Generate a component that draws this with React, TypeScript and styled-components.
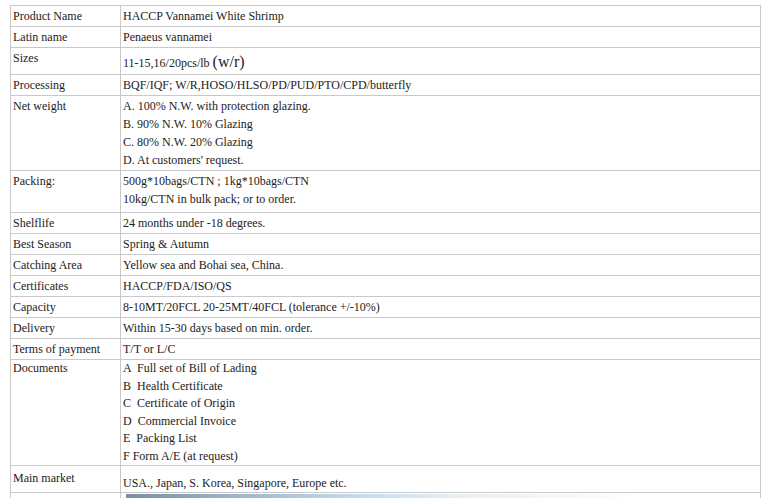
import styled, { createGlobalStyle } from "styled-components";

const GlobalStyle = createGlobalStyle`
  html, body {
    margin: 0;
    padding: 0;
    background: #ffffff;
    overflow: hidden;
  }
`;

const Page = styled.div`
  padding: 5px 0 0 10px;
`;

const SpecTable = styled.table`
  width: 751px;
  border-collapse: collapse;
  table-layout: fixed;
  font-family: "Liberation Serif", "Times New Roman", serif;
  font-size: 12px;
  color: #222;
`;

const Cell = styled.td<{ $pad?: number; $bottom?: number }>`
  border: 1px solid #c9c9c9;
  padding: ${(p) => p.$pad ?? 1}px 2px ${(p) => p.$bottom ?? 1}px 2px;
  vertical-align: top;
  font-family: "Liberation Serif", "Times New Roman", serif;
  font-size: 12px;
  line-height: 18px;
  color: #222;
`;

const Label = styled(Cell)`
  width: 105px;
`;

const Big = styled.span`
  font-size: 16px;
  line-height: 18px;
`;

const Line = styled.div<{ $h?: number }>`
  white-space: pre;
  height: ${(p) => p.$h ?? 18}px;
  line-height: ${(p) => p.$h ?? 18}px;
  font-family: "Liberation Serif", "Times New Roman", serif;
`;

const Photo = styled.div`
  margin: 0 0 0 3px;
  height: 160px;
  width: 520px;
  background: linear-gradient(
    90deg,
    #7d8ca3 0%,
    #9fb2c6 20%,
    #c9dbea 45%,
    #e6f0f7 65%,
    #ffffff 100%
  );
`;

type Row = {
  label: string;
  lines: React.ReactNode[];
  pad?: number;
  bottom?: number;
  labelPad?: number;
  lineH?: number;
};

const rows: Row[] = [
  { label: "Product Name", lines: ["HACCP Vannamei White Shrimp"] },
  { label: "Latin name", lines: ["Penaeus vannamei"] },
  {
    label: "Sizes",
    lines: [
      <>
        11-15,16/20pcs/lb <Big>(w/r)</Big>
      </>,
    ],
    pad: 5,
    bottom: 3,
  },
  { label: "Processing", lines: ["BQF/IQF; W/R,HOSO/HLSO/PD/PUD/PTO/CPD/butterfly"] },
  {
    label: "Net weight",
    lines: [
      "A. 100% N.W. with protection glazing.",
      "B. 90% N.W. 10% Glazing",
      "C. 80% N.W. 20% Glazing",
      "D. At customers' request.",
    ],
  },
  {
    label: "Packing:",
    lines: ["500g*10bags/CTN ; 1kg*10bags/CTN", "10kg/CTN in bulk pack; or to order."],
    pad: 1,
    bottom: 4,
  },
  { label: "Shelflife", lines: ["24 months under -18 degrees."] },
  { label: "Best Season", lines: ["Spring & Autumn"] },
  { label: "Catching Area", lines: ["Yellow sea and Bohai sea, China."] },
  { label: "Certificates", lines: ["HACCP/FDA/ISO/QS"] },
  { label: "Capacity", lines: ["8-10MT/20FCL 20-25MT/40FCL (tolerance +/-10%)"] },
  { label: "Delivery", lines: ["Within 15-30 days based on min. order."] },
  { label: "Terms of payment", lines: ["T/T or L/C"] },
  {
    label: "Documents",
    lines: [
      "A  Full set of Bill of Lading",
      "B  Health Certificate",
      "C  Certificate of Origin",
      "D  Commercial Invoice",
      "E  Packing List",
      "F Form A/E (at request)",
    ],
    pad: 0,
    bottom: 0,
    labelPad: 0,
    lineH: 17.5,
  },
  {
    label: "Main market",
    lines: ["USA., Japan, S. Korea, Singapore, Europe etc."],
    pad: 8,
    bottom: 0,
    labelPad: 3,
  },
];

export default function App() {
  return (
    <Page>
      <GlobalStyle />
      <SpecTable>
        <tbody>
          {rows.map((r) => (
            <tr key={r.label}>
              <Label $pad={r.labelPad} $bottom={0}>
                <Line $h={r.lineH}>{r.label}</Line>
              </Label>
              <Cell $pad={r.pad} $bottom={r.bottom}>
                {r.lines.map((l, i) => (
                  <Line key={i} $h={r.lineH}>
                    {l}
                  </Line>
                ))}
              </Cell>
            </tr>
          ))}
          <tr>
            <Label />
            <Cell>
              <Photo />
            </Cell>
          </tr>
        </tbody>
      </SpecTable>
    </Page>
  );
}
